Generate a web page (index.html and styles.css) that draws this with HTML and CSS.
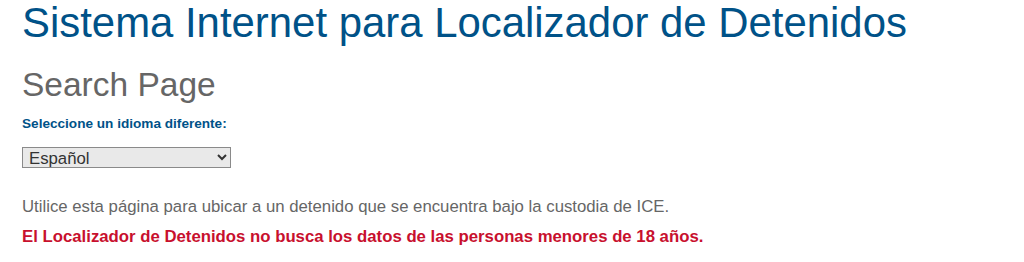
FILE: index.html
```html
<!DOCTYPE html>
<html lang="es">
<head>
<meta charset="utf-8">
<title>Sistema Internet para Localizador de Detenidos</title>
<link rel="stylesheet" href="styles.css">
</head>
<body>
<main class="page">
  <h1 class="title">Sistema Internet para Localizador de Detenidos</h1>
  <h2 class="subtitle">Search Page</h2>
  <label class="lang-label" for="lang">Seleccione un idioma diferente:</label>
  <div class="lang-row">
    <select id="lang" class="lang-select">
      <option>Español</option>
      <option>English</option>
    </select>
  </div>
  <p class="intro">Utilice esta página para ubicar a un detenido que se encuentra bajo la custodia de ICE.</p>
  <p class="warning">El Localizador de Detenidos no busca los datos de las personas menores de 18 años.</p>
</main>
</body>
</html>
```
FILE: styles.css
```css
html, body {
  margin: 0;
  padding: 0;
  background: #ffffff;
}
body {
  font-family: "Liberation Sans", Arial, sans-serif;
}
.page {
  padding: 0 22px;
  display: flex;
  flex-direction: column;
  align-items: flex-start;
}
.title {
  margin: 0;
  padding-top: 0;
  font-size: 41.9px;
  line-height: 46px;
  font-weight: normal;
  color: #005288;
}
.subtitle {
  margin: 20px 0 0 0;
  font-size: 33.5px;
  line-height: 38px;
  font-weight: normal;
  color: #666666;
}
.lang-label {
  margin-top: 11px;
  font-size: 13.6px;
  line-height: 17px;
  font-weight: bold;
  color: #005288;
}
.lang-row {
  margin-top: 15px;
}
.lang-select {
  width: 209px;
  height: 21px;
  font-family: "Liberation Sans", Arial, sans-serif;
  font-size: 16.75px;
  color: #333333;
  background: #e9e9e9;
  border: 1px solid #8a8a8a;
  border-radius: 0;
  padding: 0 2px;
}
.intro {
  margin: 29px 0 0 0;
  font-size: 16.75px;
  line-height: 20px;
  color: #666666;
}
.warning {
  margin: 10px 0 0 0;
  font-size: 16.75px;
  line-height: 20px;
  font-weight: bold;
  color: #c8102e;
}
```
